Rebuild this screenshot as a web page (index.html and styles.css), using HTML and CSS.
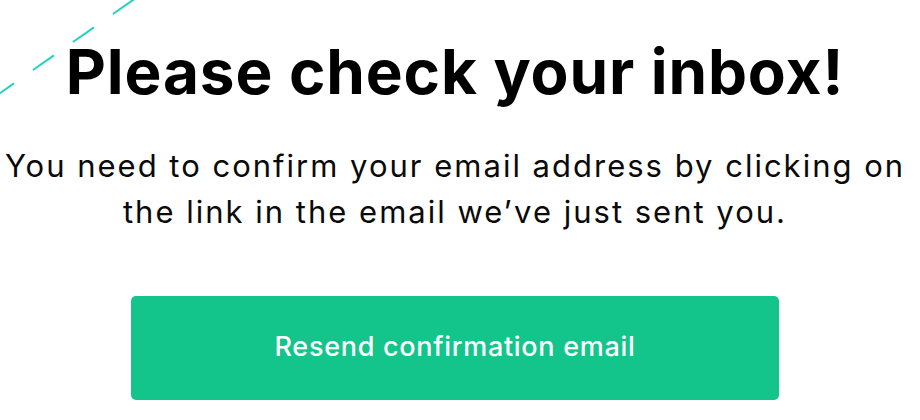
FILE: index.html
```html
<!DOCTYPE html>
<html lang="en">
<head>
<meta charset="utf-8">
<title>Please check your inbox!</title>
<link rel="stylesheet" href="styles.css">
</head>
<body>
<svg class="deco" width="160" height="110" viewBox="0 0 160 110" aria-hidden="true">
  <line x1="-7" y1="98" x2="153" y2="-14" stroke="#22d1c2" stroke-width="2" stroke-dasharray="25.6 23.2"/>
</svg>
<main class="page">
  <h1 class="title">Please check your inbox!</h1>
  <p class="lead">You need to confirm your email address by clicking on<br>the link in the email we’ve just sent you.</p>
  <button class="btn" type="button">Resend confirmation email</button>
</main>
</body>
</html>
```
FILE: styles.css
```css
html, body {
  margin: 0;
  padding: 0;
  background: #ffffff;
}
body {
  font-family: Inter, "Noto Sans", sans-serif;
  color: #000;
  position: relative;
  width: 920px;
  height: 420px;
  overflow: hidden;
}
.deco {
  position: absolute;
  left: 0;
  top: 0;
}
.page {
  width: 910px;
  display: flex;
  flex-direction: column;
  align-items: center;
  padding-top: 36px;
}
.title {
  margin: 0;
  font-size: 62px;
  font-weight: 700;
  line-height: 72px;
  letter-spacing: 0.9px;
  white-space: nowrap;
  color: #000;
}
.lead {
  margin: 35px 0 0;
  font-size: 31px;
  font-weight: 400;
  line-height: 46px;
  letter-spacing: 2px;
  text-align: center;
  white-space: nowrap;
  color: #0a0a0a;
}
.btn {
  margin-top: 61px;
  width: 648px;
  height: 104px;
  border: 0;
  border-radius: 5px;
  background: #13c58a;
  color: #fff;
  font-family: Inter, "Noto Sans", sans-serif;
  font-size: 27px;
  font-weight: 500;
  letter-spacing: 0.7px;
  display: flex;
  align-items: center;
  justify-content: center;
  padding: 0 0 3px;
  cursor: pointer;
}
```
